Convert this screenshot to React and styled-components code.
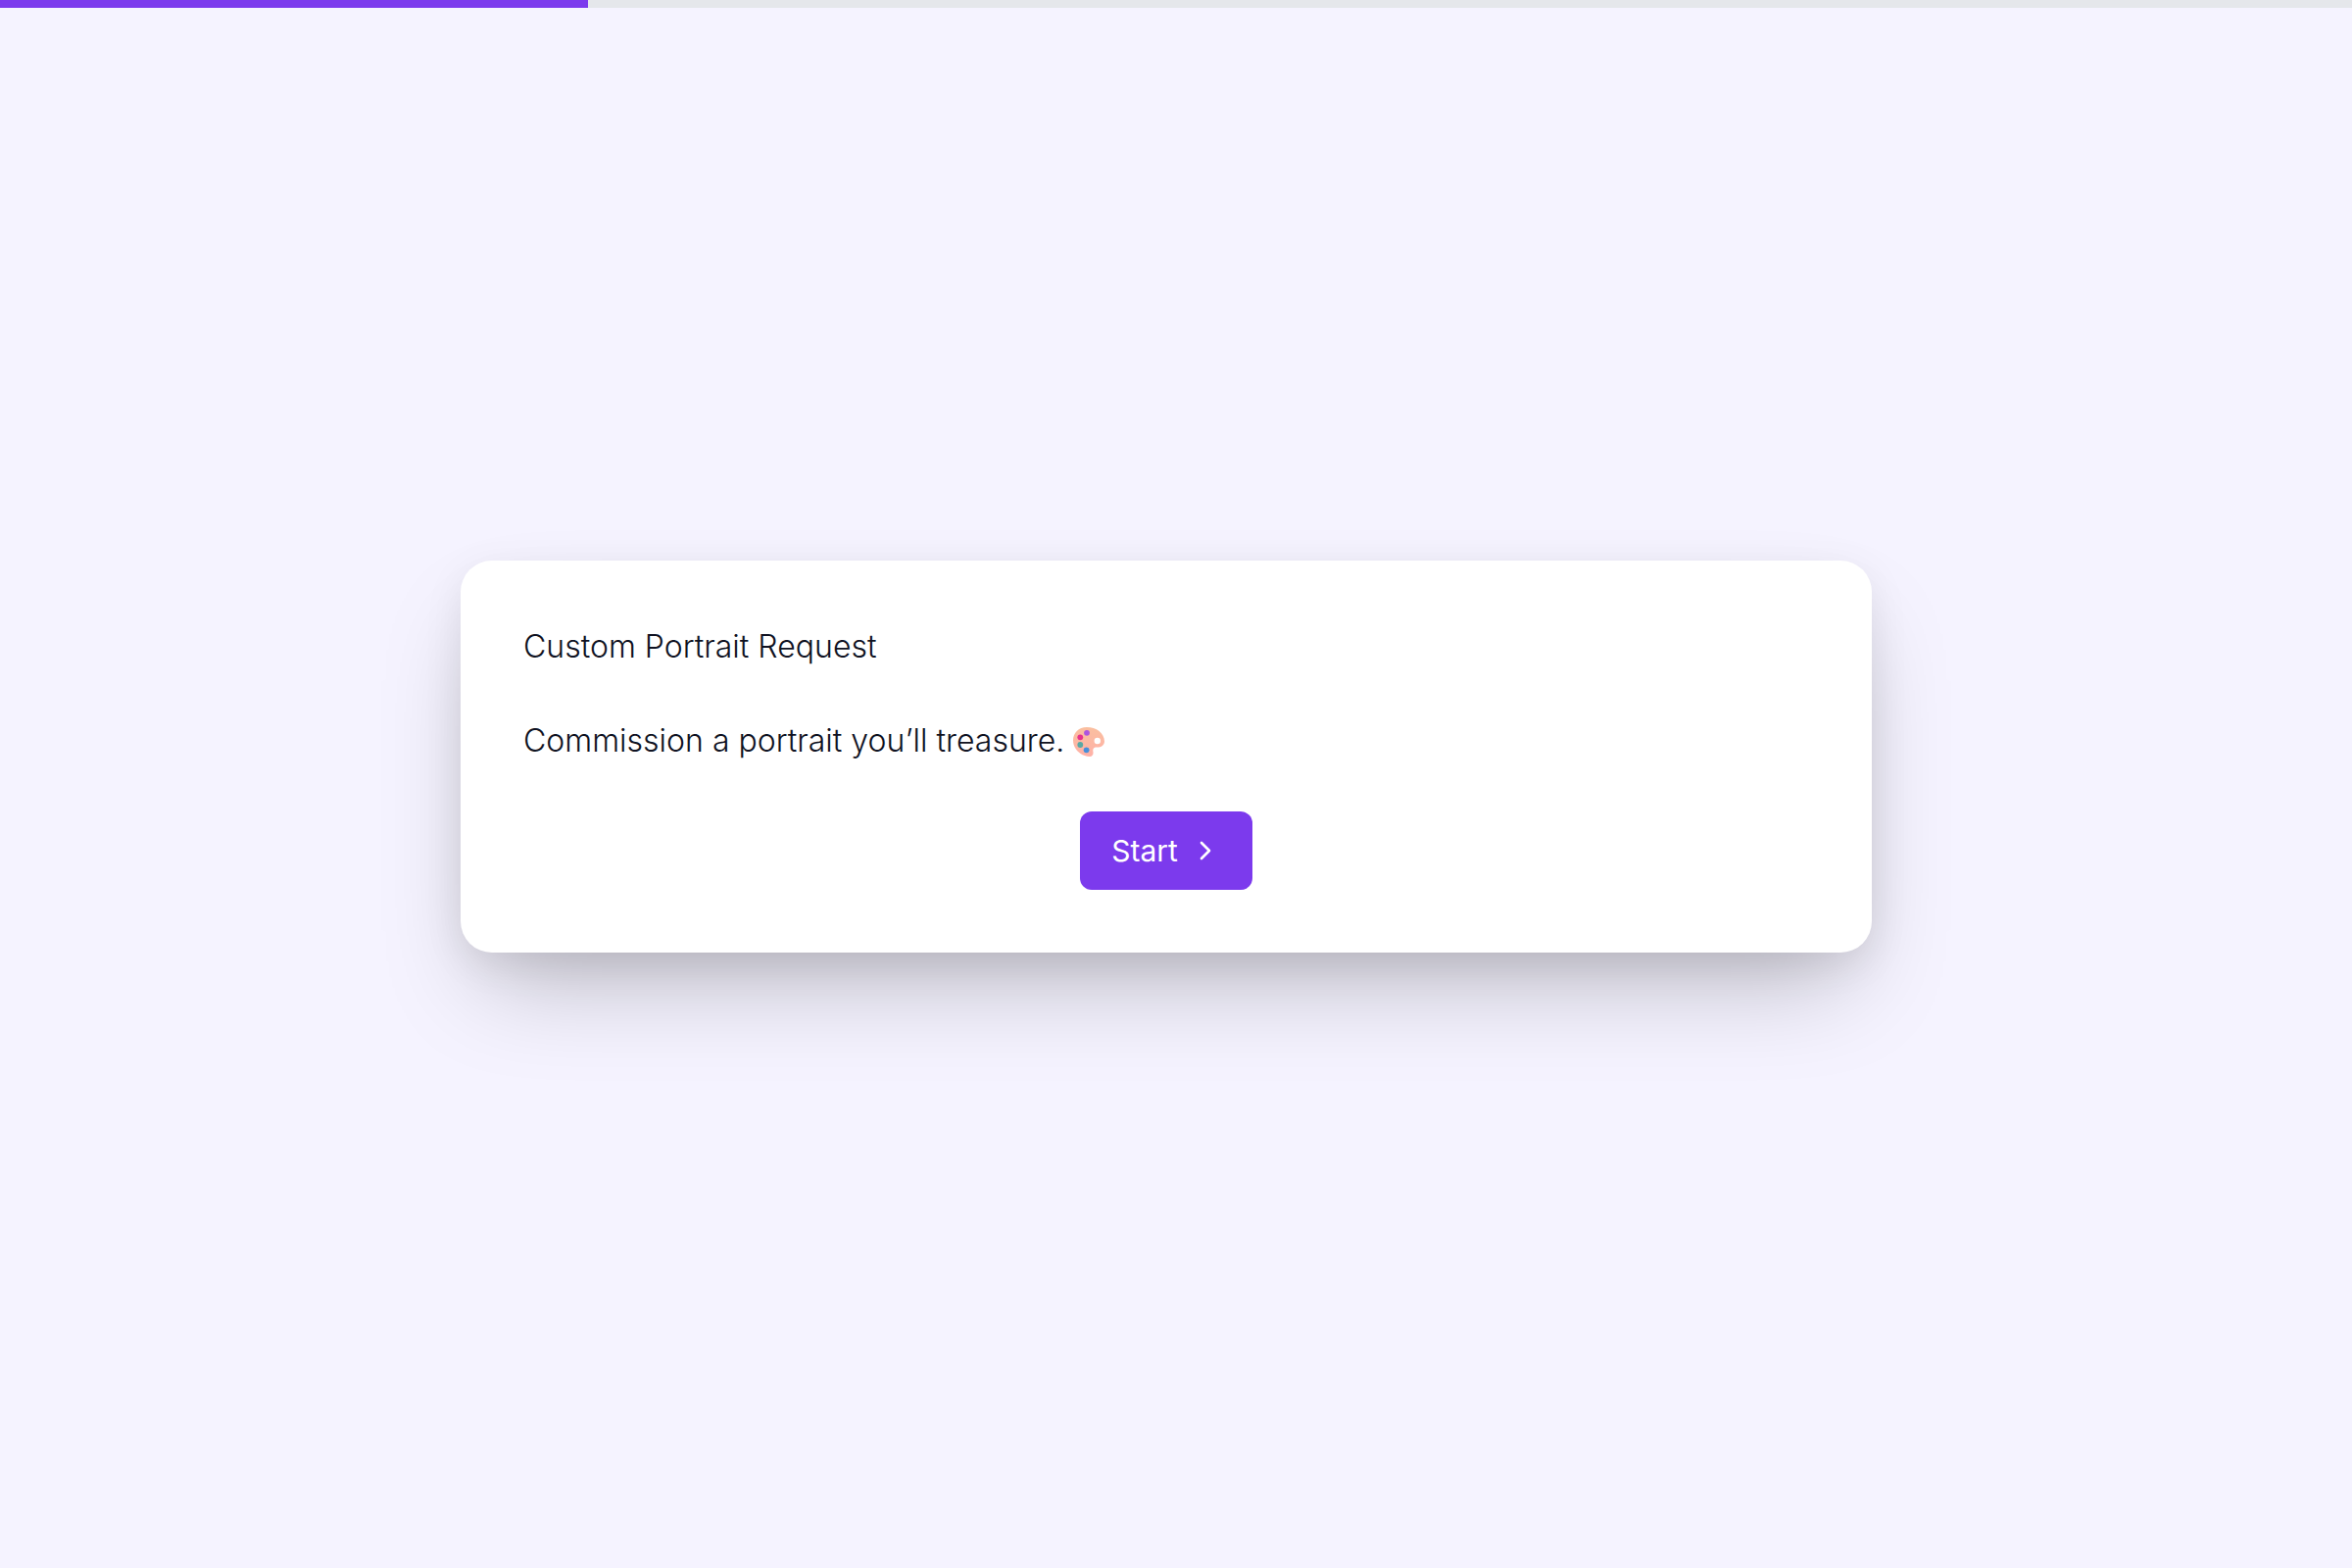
import React from 'react';
import styled, { createGlobalStyle } from 'styled-components';
import { ChevronRight } from 'lucide-react';

const PaletteIcon = () => (
  <svg width='34' height='32' viewBox='0 0 34 32' role='img' aria-label='palette'>
    <defs>
      <linearGradient id='board' x1='0' y1='0' x2='0' y2='1'>
        <stop offset='0' stopColor='#fabf9f' />
        <stop offset='1' stopColor='#ffb1a8' />
      </linearGradient>
    </defs>
    <path
      fill='url(#board)'
      fillRule='evenodd'
      d='M15 2C6.500 2 1 8 1 15.500C1 24.500 9 31.500 17.500 32C20.500 32.200 22 29.800 21.400 27C20.800 24.400 22 22.600 25.200 22.600C29.800 22.700 33 20.300 33 16.500C33 8 24.500 2 15 2ZM25.800 12.800A3.200 3.200 0 1 1 25.800 19.200A3.200 3.200 0 1 1 25.800 12.800Z'
    />
    <circle cx='15' cy='7.800' r='2.900' fill='#ad54e0' />
    <circle cx='8.300' cy='12.300' r='2.900' fill='#e8338d' />
    <circle cx='8.300' cy='20' r='2.900' fill='#59a9a5' />
    <circle cx='14.600' cy='25.300' r='2.900' fill='#488fda' />
  </svg>
);

const App = () => {
  const progress = 25;

  return (
    <>
      <GlobalStyle />
      <Page>
        <Progress role='progressbar' aria-label='Progress' aria-valuenow={progress}>
          <ProgressFill style={{ width: `${progress}%` }} />
        </Progress>
        <Main>
          <Card>
            <Text>Custom Portrait Request</Text>
            <Text>
              Commission a portrait you’ll treasure.
              <PaletteIcon />
            </Text>
            <StartButton type='button'>
              Start
              <ChevronRight size={32} strokeWidth={2} />
            </StartButton>
          </Card>
        </Main>
      </Page>
    </>
  );
};

const GlobalStyle = createGlobalStyle`
  * {
    box-sizing: border-box;
  }
  body {
    margin: 0;
    background-color: #f5f3ff;
    color: #0f1222;
    font-family: Inter, 'Liberation Sans', sans-serif;
  }
`;

const Page = styled.div`
  display: flex;
  flex-direction: column;
  min-height: 100vh;
`;

const Progress = styled.div`
  height: 8px;
  background-color: #e5e7eb;
`;

const ProgressFill = styled.div`
  height: 100%;
  background-color: #7c3aed;
`;

const Main = styled.main`
  flex: 1;
  display: flex;
  align-items: center;
  justify-content: center;
  padding: 0 20px 64px 0;
`;

const Card = styled.section`
  display: flex;
  flex-direction: column;
  gap: 48px;
  width: 100%;
  max-width: 1440px;
  padding: 64px;
  border-radius: 32px;
  background-color: #fff;
  box-shadow: 0 50px 100px -24px rgba(0, 0, 0, 0.25),
    0 12px 40px rgba(0, 0, 0, 0.08);
`;

const Text = styled.p`
  display: flex;
  align-items: center;
  gap: 8px;
  margin: 0;
  font-size: 32px;
  font-weight: 300;
  line-height: 48px;
`;

const StartButton = styled.button`
  display: flex;
  align-items: center;
  gap: 12px;
  align-self: center;
  height: 80px;
  padding: 0 32px;
  border: none;
  border-radius: 12px;
  background-color: #7c3aed;
  color: #fff;
  font-family: inherit;
  font-size: 30px;
  font-weight: 400;
  cursor: pointer;
`;

export default App;
